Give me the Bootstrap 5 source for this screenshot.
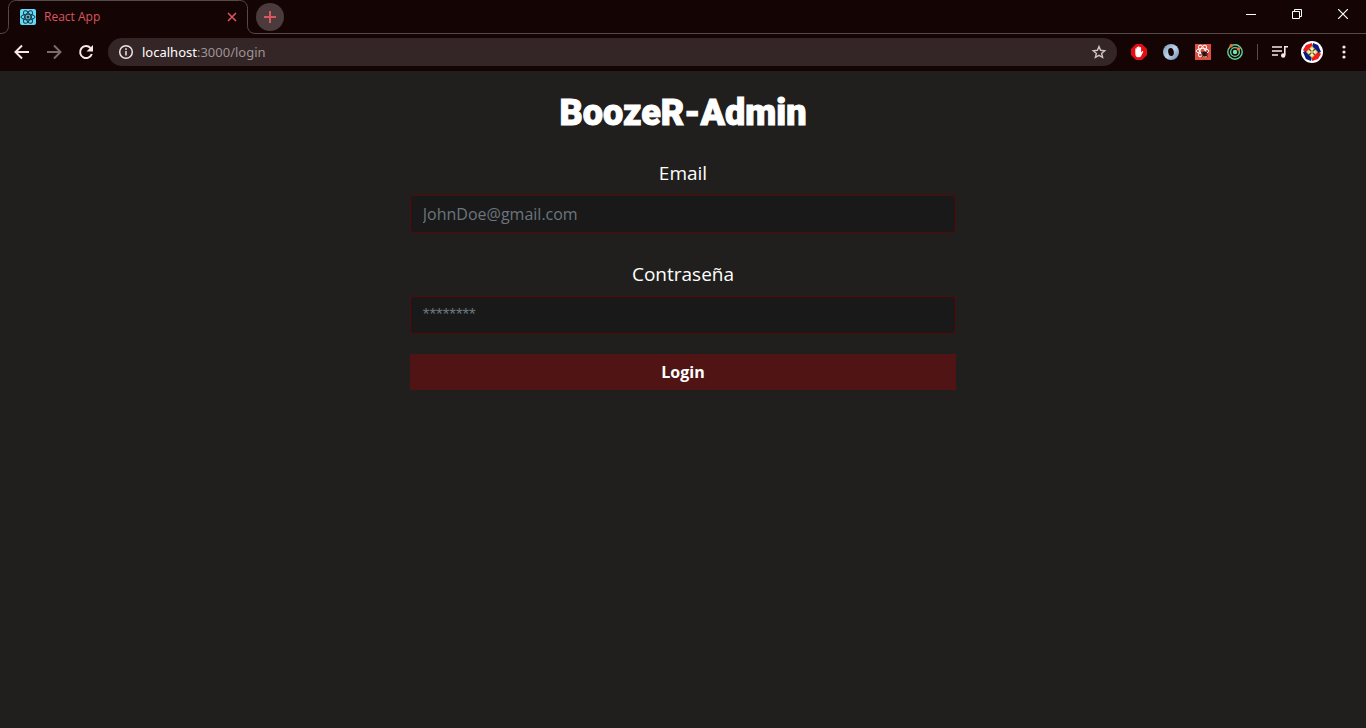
<!DOCTYPE html>
<html lang="es">
<head>
<meta charset="utf-8">
<meta name="viewport" content="width=device-width, initial-scale=1">
<title>React App</title>
<link href="https://cdn.jsdelivr.net/npm/bootstrap@5.3.0/dist/css/bootstrap.min.css" rel="stylesheet">
<style>
  body { background: #211f1d; color: #fff; font-family: "Open Sans", "Noto Sans", sans-serif; }
  .chrome { background: #140404; padding-bottom: 1px; }
  .chrome button { background: none; border: 0; padding: 0; color: #f8e9e8; }
  .tab-strip { height: 34px; }
  .tab-item { width: 256px; padding: 0 16px 0 20px; color: #dc5660; font-size: 12px; }
  .tab-outline { position: absolute; left: 0; top: 0; }
  .tab-title { font-family: "Open Sans", sans-serif; color: #dc5660; }
  .strip-rest { border-bottom: 1px solid #554a4a; }
  .chrome .new-tab { width: 28px; height: 28px; background: #4c3b3c; color: #dc5660; margin-top: 3px; }
  .chrome .win-btn { width: 46px; height: 28px; color: #fff; }
  .toolbar { height: 36px; padding: 0 6px; }
  .chrome .tool { width: 32px; height: 32px; }
  .chrome .tool.faded { color: #796c6c; }
  .address { height: 28px; background: #342526; border-radius: 14px; margin: 0 6px; padding: 0 10px; font: 13px/20px "Noto Sans", sans-serif; }
  .address .path { color: #9d9495; }
  .divider { width: 1px; height: 16px; background: #5b4b4b; margin: 0 6px; }
  .chrome svg { display: block; }
  .login-box { width: 40%; }
  .brand-title { font: 900 36px/48px Roboto, sans-serif; -webkit-text-stroke: 1px #fff; margin: 18px 0 19px; }
  .login-label { font-size: 19px; line-height: 34px; margin-bottom: 5px; }
  .login-field, .login-field:focus { background: #191919; color: #fff; border: 1px solid #570808; border-radius: 4px; height: 38px; font-size: 16px; }
  .login-field::placeholder { color: #6c757d; }
  .login-field[type="password"] { font-family: "Liberation Sans", sans-serif; font-size: 17px; }
  .login-btn { background: #501414; color: #fff; font-size: 16px; font-weight: 700; border: 0; border-radius: 0; height: 36px; margin-top: 20px; }
</style>
</head>
<body>
<header class="chrome">
  <div class="tab-strip d-flex">
    <div class="tab-item position-relative d-flex align-items-center">
      <svg class="tab-outline" width="256" height="34" fill="none" stroke="#554a4a"><path d="M0 33.5c6 0 8.500-3 8.500-8V8.500c0-5 3-8 8-8h223c5 0 8 3 8 8v17c0 5 3 8 8.500 8"/></svg>
      <svg width="16" height="16" viewBox="0 0 16 16"><rect width="16" height="16" rx="2" fill="#61dafb"/><g fill="none" stroke="#1c3640"><ellipse cx="8" cy="8" rx="7" ry="2.800"/><ellipse cx="8" cy="8" rx="7" ry="2.800" transform="rotate(60 8 8)"/><ellipse cx="8" cy="8" rx="7" ry="2.800" transform="rotate(120 8 8)"/></g><circle cx="8" cy="8" r="1.500" fill="#1c3640"/></svg>
      <span class="tab-title ms-2 flex-grow-1">React App</span>
      <button type="button" class="position-relative" aria-label="Cerrar pestaña"><svg width="16" height="16" fill="none" stroke="#dc5660" stroke-width="1.600"><path d="M4 4l8 8M12 4l-8 8"/></svg></button>
    </div>
    <div class="strip-rest flex-grow-1 d-flex justify-content-between align-items-start">
      <button type="button" class="new-tab rounded-circle d-flex align-items-center justify-content-center" aria-label="Nueva pestaña"><svg width="14" height="14" stroke="currentColor" stroke-width="2"><path d="M7 1v12M1 7h12"/></svg></button>
      <div class="d-flex">
        <button type="button" class="win-btn d-flex align-items-center justify-content-center" aria-label="Minimizar"><svg width="10" height="10" stroke="currentColor"><path d="M0 5.500h10"/></svg></button>
        <button type="button" class="win-btn d-flex align-items-center justify-content-center" aria-label="Restaurar"><svg width="10" height="10" fill="none" stroke="currentColor"><path d="M.5 2.500h7v7h-7zM2.500 2.500v-2h7v7h-2"/></svg></button>
        <button type="button" class="win-btn d-flex align-items-center justify-content-center" aria-label="Cerrar"><svg width="10" height="10" stroke="currentColor" stroke-width="1.200"><path d="M0 0l10 10M10 0L0 10"/></svg></button>
      </div>
    </div>
  </div>
  <div class="toolbar d-flex align-items-center">
    <button type="button" class="tool d-flex align-items-center justify-content-center" aria-label="Atrás"><svg width="16" height="16" fill="none" stroke="currentColor" stroke-width="2"><path d="M15 8H2.500M8 1.500L1.500 8 8 14.500"/></svg></button>
    <button type="button" class="tool faded d-flex align-items-center justify-content-center" aria-label="Adelante"><svg width="16" height="16" fill="none" stroke="currentColor" stroke-width="2"><path d="M1 8h12.500M8 1.500L14.500 8 8 14.500"/></svg></button>
    <button type="button" class="tool d-flex align-items-center justify-content-center" aria-label="Recargar"><svg width="16" height="16" fill="none" stroke="currentColor" stroke-width="2"><path d="M13.800 10A6 6 0 1 1 12.500 4"/><path d="M15 1v6.500H8.500z" fill="currentColor" stroke="none"/></svg></button>
    <div class="address flex-grow-1 d-flex align-items-center">
      <svg width="16" height="16" fill="none" stroke="#f1e5e4" stroke-width="1.500"><circle cx="8" cy="8" r="6.300"/><path d="M8 7v4.500M8 4.300v1.700"/></svg>
      <span class="ms-2 flex-grow-1">localhost<span class="path">:3000/login</span></span>
      <button type="button" aria-label="Añadir a favoritos"><svg width="16" height="16" fill="none" stroke="#cfc5c5" stroke-width="1.400"><path d="M8 2.500l1.600 3.800 4.100.4-3.100 2.700 1 4L8 11.300l-3.600 2.100 1-4-3.100-2.700 4.100-.4z"/></svg></button>
    </div>
    <button type="button" class="tool d-flex align-items-center justify-content-center" aria-label="Bloqueador de anuncios"><svg width="16" height="16"><path d="M5 0h6l5 5v6l-5 5H5l-5-5V5z" fill="#e40d12"/><path d="M4.300 8.500V5c0-1 1.300-1 1.300 0V3.500c0-1 1.500-1 1.500 0V3c0-1 1.500-1 1.500 0v.7c0-1 1.500-1 1.500 0V8.500l1-1.200c.6-.6 1.400 0 1 .7L10 12.200c-1 1.600-4.200 1.500-5 0-.6-1-.7-2-.7-3.700z" fill="#fff"/></svg></button>
    <button type="button" class="tool d-flex align-items-center justify-content-center" aria-label="Extensión de anillo"><svg width="16" height="16"><defs><linearGradient id="ring" x2="1" y2="1"><stop stop-color="#7895b8"/><stop offset=".5" stop-color="#bdd2e6"/><stop offset="1" stop-color="#6688b3"/></linearGradient></defs><circle cx="8" cy="8" r="8" fill="url(#ring)"/><ellipse cx="8" cy="8" rx="2.800" ry="4" fill="#140404" transform="rotate(-10 8 8)"/></svg></button>
    <button type="button" class="tool d-flex align-items-center justify-content-center" aria-label="React Developer Tools"><svg width="16" height="16"><rect width="16" height="16" fill="#dc4e41"/><g fill="none" stroke="#fff"><ellipse cx="7.500" cy="7" rx="6.300" ry="2.500"/><ellipse cx="7.500" cy="7" rx="6.300" ry="2.500" transform="rotate(60 7.500 7)"/><ellipse cx="7.500" cy="7" rx="6.300" ry="2.500" transform="rotate(120 7.500 7)"/></g><ellipse cx="9.500" cy="10" rx="2.300" ry="2.800" fill="#2b1412"/><path d="M6 8l7 4.500M6.500 13l6-5.500M6 10h7" stroke="#2b1412"/></svg></button>
    <button type="button" class="tool d-flex align-items-center justify-content-center" aria-label="Extensión de órbita"><svg width="16" height="16" fill="none" stroke="#5fd39c" stroke-width="1.400"><circle cx="8" cy="8" r="7.200"/><circle cx="8" cy="8" r="4.400"/><circle cx="8" cy="8" r="2.200" fill="#6fe3b0" stroke="none"/><circle cx="4.200" cy="1.800" r="1.700" fill="#f26a2d" stroke="none"/><circle cx="11.500" cy="5" r="1.700" fill="#f26a2d" stroke="none"/></svg></button>
    <span class="divider"></span>
    <button type="button" class="tool d-flex align-items-center justify-content-center" aria-label="Controlar multimedia"><svg width="16" height="16" fill="none" stroke="currentColor" stroke-width="1.600"><path d="M0 3h10M0 7h10M0 11h6M16 2.800h-3.200V11"/><circle cx="11.200" cy="11.500" r="2.200" fill="currentColor" stroke="none"/></svg></button>
    <button type="button" class="tool d-flex align-items-center justify-content-center" aria-label="Perfil"><svg width="22" height="22" viewBox="0 0 22 22"><defs><clipPath id="face"><circle cx="11" cy="11" r="11"/></clipPath></defs><g clip-path="url(#face)"><path d="M0 0h22v22H0z" fill="#fff"/><path d="M2 9L5 4l6-2v4L5 12zM20 13l-3 5-6 2v-4l6-6z" fill="#ee1c1c"/><path d="M12 2l5 2 3 7-3 1-6-6zM10 20l-5-2-3-7 3-1 6 6z" fill="#0a1b85"/><path d="M11 5l6 6-6 6-6-6z" fill="#e9d34a"/><path d="M11 7l4 4-4 4-4-4z" fill="#fff"/><path d="M8 8l6 6M14 8l-6 6" stroke="#4a4468" stroke-width="1.300"/><circle cx="11" cy="11" r="1.800" fill="#d9be25"/></g></svg></button>
    <button type="button" class="tool d-flex align-items-center justify-content-center" aria-label="Menú"><svg width="16" height="16" fill="currentColor"><circle cx="8" cy="3" r="1.600"/><circle cx="8" cy="8" r="1.600"/><circle cx="8" cy="13" r="1.600"/></svg></button>
  </div>
</header>
<main class="login-box mx-auto text-center d-flex flex-column">
  <h1 class="brand-title">BoozeR-Admin</h1>
  <form class="d-flex flex-column" onsubmit="return false">
    <label class="login-label" for="email">Email</label>
    <input class="login-field form-control mb-4" id="email" type="email" placeholder="JohnDoe@gmail.com">
    <label class="login-label" for="password">Contraseña</label>
    <input class="login-field form-control" id="password" type="password" placeholder="********">
    <button class="login-btn btn w-100" type="submit">Login</button>
  </form>
</main>
<script src="https://cdn.jsdelivr.net/npm/bootstrap@5.3.0/dist/js/bootstrap.bundle.min.js"></script>
</body>
</html>
